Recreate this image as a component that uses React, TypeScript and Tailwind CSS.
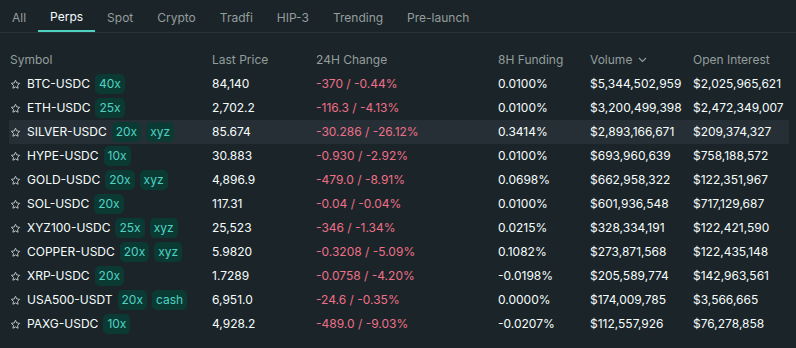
import React from "react";

const tabs = ["All", "Perps", "Spot", "Crypto", "Tradfi", "HIP-3", "Trending", "Pre-launch"];

type Row = {
  sym: string;
  tags: string[];
  price: string;
  change: string;
  funding: string;
  volume: string;
  oi: string;
};

const rows: Row[] = [
  { sym: "BTC-USDC", tags: ["40x"], price: "84,140", change: "-370 / -0.44%", funding: "0.0100%", volume: "$5,344,502,959", oi: "$2,025,965,621" },
  { sym: "ETH-USDC", tags: ["25x"], price: "2,702.2", change: "-116.3 / -4.13%", funding: "0.0100%", volume: "$3,200,499,398", oi: "$2,472,349,007" },
  { sym: "SILVER-USDC", tags: ["20x", "xyz"], price: "85.674", change: "-30.286 / -26.12%", funding: "0.3414%", volume: "$2,893,166,671", oi: "$209,374,327" },
  { sym: "HYPE-USDC", tags: ["10x"], price: "30.883", change: "-0.930 / -2.92%", funding: "0.0100%", volume: "$693,960,639", oi: "$758,188,572" },
  { sym: "GOLD-USDC", tags: ["20x", "xyz"], price: "4,896.9", change: "-479.0 / -8.91%", funding: "0.0698%", volume: "$662,958,322", oi: "$122,351,967" },
  { sym: "SOL-USDC", tags: ["20x"], price: "117.31", change: "-0.04 / -0.04%", funding: "0.0100%", volume: "$601,936,548", oi: "$717,129,687" },
  { sym: "XYZ100-USDC", tags: ["25x", "xyz"], price: "25,523", change: "-346 / -1.34%", funding: "0.0215%", volume: "$328,334,191", oi: "$122,421,590" },
  { sym: "COPPER-USDC", tags: ["20x", "xyz"], price: "5.9820", change: "-0.3208 / -5.09%", funding: "0.1082%", volume: "$273,871,568", oi: "$122,435,148" },
  { sym: "XRP-USDC", tags: ["20x"], price: "1.7289", change: "-0.0758 / -4.20%", funding: "-0.0198%", volume: "$205,589,774", oi: "$142,963,561" },
  { sym: "USA500-USDT", tags: ["20x", "cash"], price: "6,951.0", change: "-24.6 / -0.35%", funding: "0.0000%", volume: "$174,009,785", oi: "$3,566,665" },
  { sym: "PAXG-USDC", tags: ["10x"], price: "4,928.2", change: "-489.0 / -9.03%", funding: "-0.0207%", volume: "$112,557,926", oi: "$76,278,858" },
];

const cols = "grid grid-cols-[202px_104px_182px_92px_103px_1fr] items-center";

function StarIcon() {
  return (
    <svg width="11" height="11" viewBox="0 0 24 24" fill="none" stroke="#d5dcdb" strokeWidth="1.8" strokeLinejoin="round">
      <path d="M12 2.8l2.8 5.8 6.3.9-4.6 4.4 1.1 6.3L12 17.2l-5.6 3 1.1-6.3L2.9 9.5l6.3-.9z" />
    </svg>
  );
}

export default function App() {
  return (
    <div className="w-[796px] h-[348px] bg-[#1b2429] text-[12px] text-[#f6fefd] overflow-hidden font-['Inter','Liberation_Sans',sans-serif]">
      {/* tabs */}
      <div className="flex h-[33px] border-b border-[#2a3338]">
        {tabs.map((t) => (
          <div
            key={t}
            className={
              "px-3 flex items-center h-full pt-[4px] " +
              (t === "Perps" ? "text-[#f6fefd] border-b-2 border-[#50d2c1]" : "text-[#949e9c]")
            }
          >
            {t}
          </div>
        ))}
      </div>

      <div className="mt-[15px] ml-[9px] w-[780px]">
        {/* header */}
        <div className={cols + " h-6 pl-[1px] text-[#949e9c]"}>
          <div>Symbol</div>
          <div>Last Price</div>
          <div>24H Change</div>
          <div>8H Funding</div>
          <div className="flex items-center gap-[6px]">
            Volume
            <svg width="9" height="6" viewBox="0 0 9 6" fill="none" stroke="#949e9c" strokeWidth="1.1">
              <path d="M1 1l3.5 3.5L8 1" />
            </svg>
          </div>
          <div>Open Interest</div>
        </div>

        {/* rows */}
        {rows.map((r, i) => (
          <div key={r.sym} className={cols + " h-6 pl-[1px] " + (i === 2 ? "bg-[#262f35]" : "")}>
            <div className="flex items-center">
              <StarIcon />
              <span className="ml-[6px]">{r.sym}</span>
              {r.tags.map((tag) => (
                <span
                  key={tag}
                  className="ml-[5px] first-of-type:ml-[6px] h-5 px-[4px] flex items-center rounded-[5px] bg-[#0b3a35] text-[#50d2c1]"
                >
                  {tag}
                </span>
              ))}
            </div>
            <div>{r.price}</div>
            <div className="text-[#ed7088]">{r.change}</div>
            <div>{r.funding}</div>
            <div>{r.volume}</div>
            <div>{r.oi}</div>
          </div>
        ))}
      </div>
    </div>
  );
}
